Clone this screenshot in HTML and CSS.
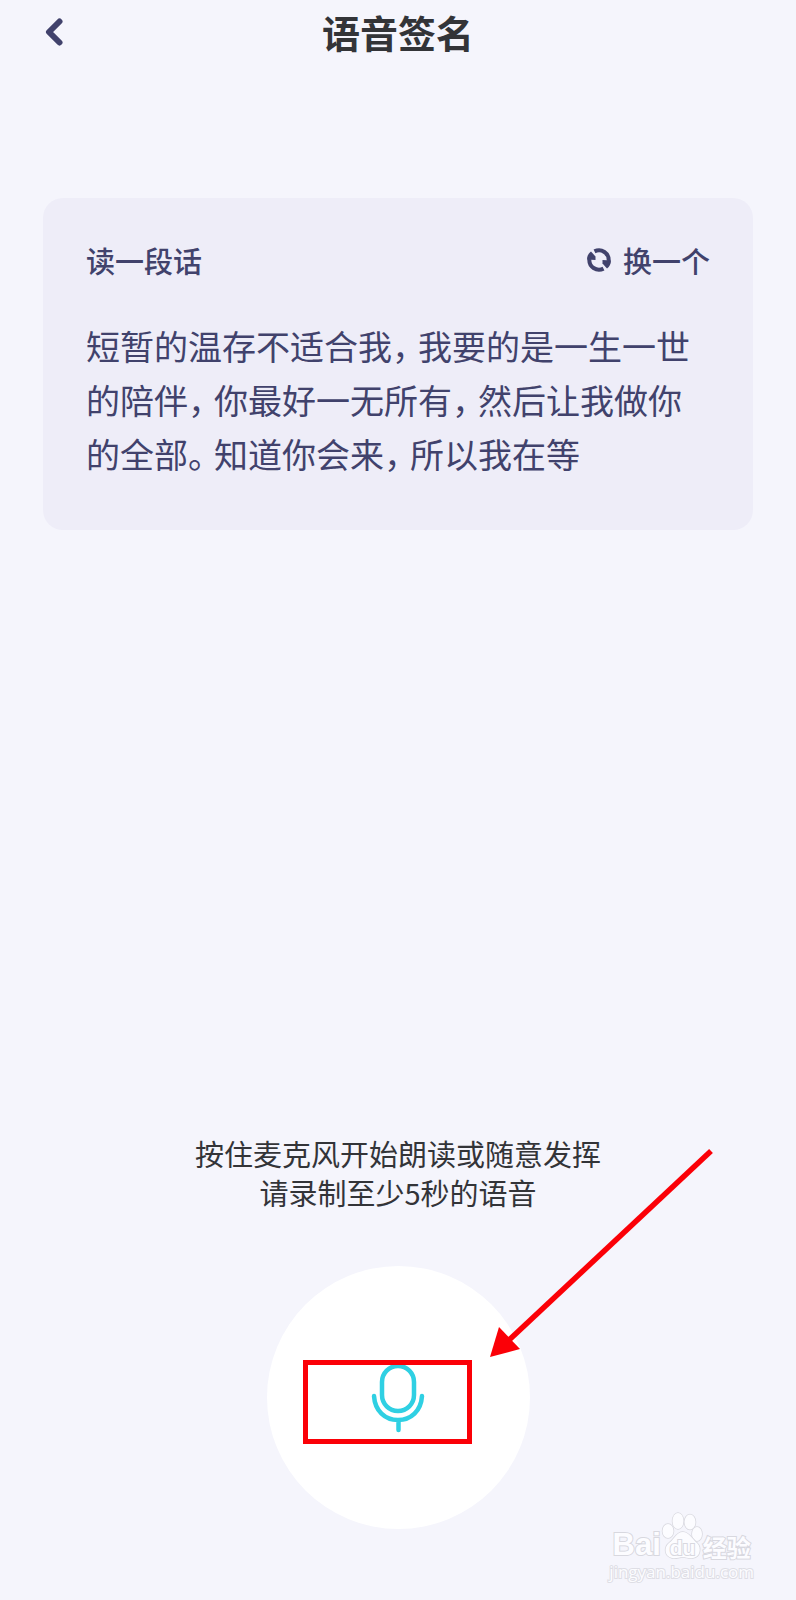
FILE: index.html
```html
<!DOCTYPE html>
<html lang="zh-CN">
<head>
    <meta charset="UTF-8">
    <meta name="viewport" content="width=device-width, initial-scale=1.0">
    <title>语音签名</title>
    <link rel="stylesheet" href="styles.css">
</head>
<body>
    <header class="topbar">
        <button type="button" class="back" aria-label="返回">
            <svg width="20" height="28" viewBox="0 0 20 28"><path d="M16.500 3.500 L6 14 L16.500 24.500"/></svg>
        </button>
        <h1>语音签名</h1>
    </header>

    <section class="card">
        <div class="card-head">
            <h2>读一段话</h2>
            <button type="button" class="refresh">
                <svg width="24" height="24" viewBox="0 0 24 24">
                    <path class="ring" d="M7.500 3.400 A9.700 9.700 0 0 1 21.600 13"/>
                    <path class="ring" d="M16.500 20.600 A9.700 9.700 0 0 1 2.400 11"/>
                    <path class="head" d="M15.500 12 L24 12.500 C24 16 22.500 18.500 20 20.500 L15.500 15.500 Z"/>
                    <path class="head" d="M8.500 12 L0 11.500 C0 8 1.500 5.500 4 3.500 L8.500 8.500 Z"/>
                </svg>
                换一个
            </button>
        </div>
        <p class="passage">短暂的温存不适合我<span class="mark">，</span>我要的是一生一世的陪伴<span class="mark">，</span>你最好一无所有<span class="mark">，</span>然后让我做你的全部<span class="mark">。</span>知道你会来<span class="mark">，</span>所以我在等</p>
    </section>

    <section class="recorder">
        <p class="hint">按住麦克风开始朗读或随意发挥<br>请录制至少5秒的语音</p>
        <div class="mic-wrap">
            <button type="button" class="mic" aria-label="录音">
                <svg width="54" height="70" viewBox="0 0 54 70">
                    <rect x="11" y="3" width="32" height="45" rx="16"/>
                    <path d="M3 33 C4 48 14 57 27 57 C40 57 50 48 51 33 M27.500 57 V67"/>
                </svg>
            </button>
            <span class="highlight"></span>
            <svg class="arrow" width="230" height="214" viewBox="0 0 230 214">
                <path class="shaft" d="M223 6 L20 196"/>
                <path class="tip" d="M2 212 L11 182 L32 204 Z"/>
            </svg>
        </div>
    </section>

    <div class="watermark">
        <div class="brand">
            <span class="bai">Bai</span>
            <span class="paw">
                <svg width="42" height="48" viewBox="0 0 42 48">
                    <ellipse cx="7" cy="19" rx="5.500" ry="7"/>
                    <ellipse cx="17" cy="9" rx="5.500" ry="8"/>
                    <ellipse cx="29" cy="10" rx="5.500" ry="7.500"/>
                    <ellipse cx="36" cy="22" rx="5" ry="7"/>
                    <path d="M22 20 C28 20 31 27 36 31 C41 36 39 45 32 46 C28 47 25 45 22 45 C18 45 15 47 11 46 C3 44 3 35 8 31 C14 27 15 20 22 20 Z"/>
                </svg>
                <span class="du">du</span>
            </span>
            <span class="jingyan">经验</span>
        </div>
        <div class="site">jingyan.baidu.com</div>
    </div>
</body>
</html>
```

FILE: styles.css
```css
* {
    box-sizing: border-box;
}
body {
    margin: 0;
    min-height: 100vh;
    position: relative;
    display: flex;
    flex-direction: column;
    background-color: #f5f5fc;
    color: #333438;
    font-family: "Noto Sans CJK SC", sans-serif;
}
h1, h2, p {
    margin: 0;
}
button {
    border: none;
    padding: 0;
    background: none;
    color: inherit;
    font-family: inherit;
    cursor: pointer;
}
svg {
    display: block;
    fill: none;
}

/* top bar */
.topbar {
    display: grid;
    grid-template-columns: 1fr auto 1fr;
    align-items: center;
    height: 64px;
    padding: 0 43px;
}
.back {
    justify-self: start;
}
.back path {
    stroke: #41426c;
    stroke-width: 6;
    stroke-linecap: round;
    stroke-linejoin: round;
}
h1 {
    font-size: 38px;
    line-height: 56px;
    font-weight: 700;
}

/* reading card */
.card {
    margin: 134px 43px 0;
    padding: 42px 43px 49px;
    border-radius: 20px;
    background-color: #eeedf8;
    color: #41426c;
}
.card-head {
    display: flex;
    justify-content: space-between;
    align-items: center;
    margin-bottom: 39px;
}
h2, .refresh {
    font-size: 29px;
    line-height: 40px;
    font-weight: 500;
}
.refresh {
    display: flex;
    align-items: center;
    gap: 12px;
}
.refresh .ring {
    stroke: #41426c;
    stroke-width: 4;
}
.refresh .head {
    fill: #41426c;
}
.passage {
    font-size: 34px;
    line-height: 54px;
}
/* half-width punctuation */
.mark {
    font-feature-settings: "halt";
    margin-right: 9px;
}

/* recorder */
.recorder {
    margin-top: auto;
    padding-bottom: 71px;
    display: flex;
    flex-direction: column;
    align-items: center;
    gap: 54px;
}
.hint {
    font-size: 29px;
    line-height: 39px;
    text-align: center;
}
.mic-wrap {
    position: relative;
}
.mic {
    display: flex;
    align-items: center;
    justify-content: center;
    width: 263px;
    height: 263px;
    border-radius: 50%;
    background-color: #fff;
}
.mic svg {
    stroke: #2fd0e3;
    stroke-width: 4.5;
    stroke-linecap: round;
}
.highlight {
    position: absolute;
    left: 36px;
    top: 94px;
    width: 169px;
    height: 84px;
    border: 5px solid #fb0007;
}
.arrow {
    position: absolute;
    left: 221px;
    top: -121px;
    pointer-events: none;
}
.arrow .shaft {
    stroke: #fb0007;
    stroke-width: 5.5;
}
.arrow .tip {
    fill: #fb0007;
}

/* watermark */
.watermark {
    position: absolute;
    right: 42px;
    bottom: 16px;
    color: #fcfcff;
    -webkit-text-stroke: 2px #d8d8df;
    paint-order: stroke fill;
}
.brand {
    display: flex;
    align-items: flex-end;
    justify-content: center;
    height: 48px;
}
.bai {
    font: bold 31px/30px "Liberation Sans", Arial, sans-serif;
}
.paw {
    position: relative;
}
.paw svg {
    fill: #fcfcff;
    stroke: #d8d8df;
    stroke-width: 1.5;
}
.du {
    position: absolute;
    left: 9px;
    bottom: 0;
    font: bold 21px/24px "Liberation Sans", Arial, sans-serif;
}
.jingyan {
    font-size: 24px;
    line-height: 26px;
    font-weight: 700;
}
.site {
    font: 17px/24px "Open Sans", sans-serif;
    -webkit-text-stroke: 2px #dedee5;
}
```
